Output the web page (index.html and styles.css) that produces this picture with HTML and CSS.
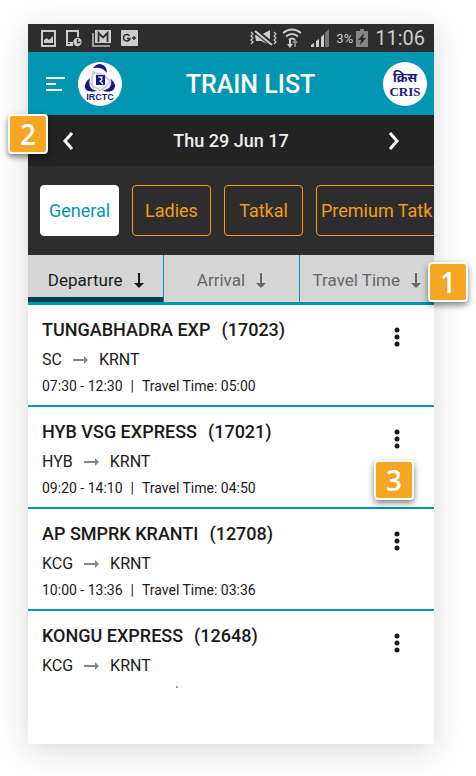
FILE: index.html
```html
<!DOCTYPE html>
<html lang="en">
<head>
<meta charset="utf-8">
<meta name="viewport" content="width=device-width, initial-scale=1">
<title>Train List</title>
<link rel="stylesheet" href="styles.css">
</head>
<body>
<main class="phone">
  <div class="status">
    <div class="status-left">
      <svg width="15" height="17" viewBox="0 0 15 17"><path fill="#ccc" fill-rule="evenodd" d="M0 0h15v17H0zM2 2v13h11V2zM3 13v-3l3-2 2 2 4-4v7z"/></svg>
      <svg width="16" height="17" viewBox="0 0 16 17"><path fill="#ccc" fill-rule="evenodd" d="M0 0h13v7h-2V2H2v10h5v4H0zM2 13v1h2v-1z"/><circle cx="11.500" cy="12" r="4.200" fill="#ccc"/><path d="M11.500 9v3.500h3" fill="none" stroke="#2d2d2d" stroke-width="1.300"/></svg>
      <svg width="19" height="17" viewBox="0 0 19 17"><path d="M1 3v13h17" fill="none" stroke="#bbb" stroke-width="1.600"/><path fill="#ccc" d="M3 0h16v13H3z"/><path d="M6.500 12V3l4.500 4.500L15.500 3v9" fill="none" stroke="#2d2d2d" stroke-width="1.800"/></svg>
      <svg width="17" height="16" viewBox="0 0 17 16"><rect width="17" height="16" rx="1" fill="#ccc"/><path d="M8.500 5.800A3.300 3.300 0 1 0 9 8.500H6M11 8h4M13 6v4" fill="none" stroke="#2d2d2d" stroke-width="1.500"/></svg>
    </div>
    <div class="status-right">
      <svg width="27" height="18" viewBox="0 0 27 18"><path fill="#ccc" d="M5 6h6l9-5v15l-9-4H6z"/><path d="M4 1l19 15" stroke="#2d2d2d" stroke-width="5"/><path d="M5 2l17 14" stroke="#ccc" stroke-width="2.200"/><path d="M1 3l2 2-2 2 2 2-2 2 2 2-2 2M24 3l2 2-2 2 2 2-2 2 2 2-2 2" fill="none" stroke="#ccc" stroke-width="1.200"/></svg>
      <svg class="wifi" width="20" height="20" viewBox="0 0 20 20"><g fill="none" stroke="#ccc" stroke-width="2"><path d="M1 5q9-7 18 0M4 8.500q6-5 12 0M7 12q3-3 6 0"/></g><path fill="#ccc" d="M7 12h2v4h2l-3 4-3-4h2z"/><path fill="#888" d="M12 19h2v-4h2l-3-4-3 4h2z"/></svg>
      <svg class="signal" width="18" height="18" viewBox="0 0 18 18"><path fill="#ccc" d="M0 18v-2l3-2v4zM5 18v-6l3-2v8zM10 18V8l3-3v13z"/><path fill="#777" d="M14 18V4l4-4v18z"/></svg>
      <span class="percent">3%</span>
      <svg class="battery" width="12" height="18" viewBox="0 0 12 18"><path fill="#858585" d="M4 0h4v2h4v16H0V2h4z"/><path fill="#2d2d2d" d="M8 4L2 11h3l-1 5 6-7H7z"/></svg>
      <span class="clock">11:06</span>
    </div>
  </div>

  <header class="appbar">
    <button class="icon-button" aria-label="Menu"><svg width="19" height="14" viewBox="0 0 19 14"><path d="M0 1h19M0 7h10M0 13h16" stroke="#fff" stroke-width="2"/></svg></button>
    <svg class="logo" width="44" height="44" viewBox="0 0 44 44">
      <circle cx="22" cy="22" r="22" fill="#fff"/>
      <g fill="none" stroke="#c9c8dc" stroke-width="1.800"><path d="M16 8q-4 10 0 19M16 11q9 0 16 8M33 17q-3 8-12 12M11 20q8 9 16 8"/></g>
      <g fill="#171780"><path d="M15 6Q18 2 22 2q7 1 7 9l-3-3q-3-3-11-2z"/><path d="M12 16q-6 5-5 10 2 5 12 3l-5-2q-4-3-2-11z"/><path d="M33 17q6 6 3 10-3 4-11 2l6-3q3-3 2-9z"/><path d="M18 13h9v10h-9z"/></g>
      <path d="M20 15h5M22 15q4 3 0 4l3 3" fill="none" stroke="#fff" stroke-width="1.200"/>
      <text x="22" y="38" class="irctc">IRCTC</text>
    </svg>
    <h1>TRAIN LIST</h1>
    <svg class="logo" width="44" height="44" viewBox="0 0 44 44">
      <circle cx="22" cy="22" r="22" fill="#fff"/>
      <text x="22" y="20" class="cris-hindi">क्रिस</text>
      <text x="22" y="34" class="cris">CRIS</text>
    </svg>
  </header>

  <section class="date">
    <button class="icon-button" aria-label="Previous day"><svg width="12" height="18" viewBox="0 0 12 18"><path d="M10 1L3 9l7 8" fill="none" stroke="#fff" stroke-width="3"/></svg></button>
    <span>Thu 29 Jun 17</span>
    <button class="icon-button" aria-label="Next day"><svg width="12" height="18" viewBox="0 0 12 18"><path d="M2 1l7 8-7 8" fill="none" stroke="#fff" stroke-width="3"/></svg></button>
  </section>

  <nav class="quotas">
    <button class="quota selected">General</button>
    <button class="quota">Ladies</button>
    <button class="quota">Tatkal</button>
    <button class="quota wide">Premium Tatk</button>
  </nav>

  <div class="sorts">
    <button class="sort active">Departure <svg width="10" height="15" viewBox="0 0 10 15"><path d="M5 0v12" stroke="currentColor" stroke-width="2"/><path d="M0 10h10l-5 5z" fill="currentColor"/></svg></button>
    <button class="sort">Arrival <svg width="10" height="15" viewBox="0 0 10 15"><path d="M5 0v12" stroke="currentColor" stroke-width="2"/><path d="M0 10h10l-5 5z" fill="currentColor"/></svg></button>
    <button class="sort">Travel Time <svg width="10" height="15" viewBox="0 0 10 15"><path d="M5 0v12" stroke="currentColor" stroke-width="2"/><path d="M0 10h10l-5 5z" fill="currentColor"/></svg></button>
    <span class="badge badge-sort">1</span>
  </div>

  <ul class="trains">
    <li class="train">
      <div>
        <h2><span>TUNGABHADRA EXP</span><span>(17023)</span></h2>
        <p class="route"><span>SC</span><svg width="15" height="9" viewBox="0 0 15 9"><path d="M0 4h11" stroke="#858585" stroke-width="2"/><path d="M11 0l4 4-4 4z" fill="#858585"/></svg><span>KRNT</span></p>
        <p class="times"><span>07:30 - 12:30</span><span>|</span><span>Travel Time: 05:00</span></p>
      </div>
      <button class="icon-button" aria-label="More"><svg width="6" height="20" viewBox="0 0 6 20"><g fill="#1a1a1a"><circle cx="3" cy="3" r="2.500"/><circle cx="3" cy="10" r="2.500"/><circle cx="3" cy="17" r="2.500"/></g></svg></button>
    </li>
    <li class="train">
      <div>
        <h2><span>HYB VSG EXPRESS</span><span>(17021)</span></h2>
        <p class="route"><span>HYB</span><svg width="15" height="9" viewBox="0 0 15 9"><path d="M0 4h11" stroke="#858585" stroke-width="2"/><path d="M11 0l4 4-4 4z" fill="#858585"/></svg><span>KRNT</span></p>
        <p class="times"><span>09:20 - 14:10</span><span>|</span><span>Travel Time: 04:50</span></p>
      </div>
      <button class="icon-button" aria-label="More"><svg width="6" height="20" viewBox="0 0 6 20"><g fill="#1a1a1a"><circle cx="3" cy="3" r="2.500"/><circle cx="3" cy="10" r="2.500"/><circle cx="3" cy="17" r="2.500"/></g></svg></button>
      <span class="badge badge-more">3</span>
    </li>
    <li class="train">
      <div>
        <h2><span>AP SMPRK KRANTI</span><span>(12708)</span></h2>
        <p class="route"><span>KCG</span><svg width="15" height="9" viewBox="0 0 15 9"><path d="M0 4h11" stroke="#858585" stroke-width="2"/><path d="M11 0l4 4-4 4z" fill="#858585"/></svg><span>KRNT</span></p>
        <p class="times"><span>10:00 - 13:36</span><span>|</span><span>Travel Time: 03:36</span></p>
      </div>
      <button class="icon-button" aria-label="More"><svg width="6" height="20" viewBox="0 0 6 20"><g fill="#1a1a1a"><circle cx="3" cy="3" r="2.500"/><circle cx="3" cy="10" r="2.500"/><circle cx="3" cy="17" r="2.500"/></g></svg></button>
    </li>
    <li class="train">
      <div>
        <h2><span>KONGU EXPRESS</span><span>(12648)</span></h2>
        <p class="route"><span>KCG</span><svg width="15" height="9" viewBox="0 0 15 9"><path d="M0 4h11" stroke="#858585" stroke-width="2"/><path d="M11 0l4 4-4 4z" fill="#858585"/></svg><span>KRNT</span></p>
        <div class="speck"></div>
      </div>
      <button class="icon-button" aria-label="More"><svg width="6" height="20" viewBox="0 0 6 20"><g fill="#1a1a1a"><circle cx="3" cy="3" r="2.500"/><circle cx="3" cy="10" r="2.500"/><circle cx="3" cy="17" r="2.500"/></g></svg></button>
    </li>
  </ul>
  <span class="badge badge-date">2</span>
</main>
</body>
</html>
```
FILE: styles.css
```css
* { box-sizing: border-box; }

body {
  margin: 0;
  padding: 24px 42px 32px 28px;
  background: #fff;
  color: #1a1a1a;
  font-family: Roboto, "Liberation Sans", sans-serif;
}

h1, h2, p, ul { margin: 0; padding: 0; }
svg { display: block; flex: none; }
button { border: 0; background: none; font: inherit; color: inherit; cursor: pointer; }
.icon-button { padding: 0; flex: none; }

.phone {
  position: relative;
  background: #fff;
  box-shadow: 0 6px 30px rgba(0, 0, 0, 0.16);
}

.status {
  display: flex;
  align-items: center;
  justify-content: space-between;
  height: 28px;
  padding: 0 9px 0 13px;
  background: #2d2d2d;
  color: #ccc;
}
.status-left, .status-right { display: flex; align-items: center; }
.status-left { gap: 10px; }
.wifi { margin-left: 5px; }
.signal { margin-left: 9px; }
.percent { margin-left: 7px; font-size: 13px; }
.battery { margin: 0 7px 0 3px; }
.clock { font-size: 20px; line-height: 30px; }

.appbar {
  display: flex;
  align-items: center;
  height: 63px;
  padding: 0 7px 0 18px;
  background: #0296b3;
  color: #fff;
}
.appbar .icon-button { margin-right: 13px; }
.appbar h1 { flex: 1; padding: 2px 4px 0 0; font-size: 25px; font-weight: 500; text-align: center; }
.irctc { fill: #171780; font: 700 9px "Liberation Sans", sans-serif; text-anchor: middle; }
.cris { fill: #171780; font: 700 13px "Liberation Serif", serif; text-anchor: middle; }
.cris-hindi { fill: #171780; font: 700 13px "Noto Sans", sans-serif; text-anchor: middle; }

.date {
  display: flex;
  align-items: center;
  justify-content: space-between;
  height: 51px;
  padding: 0 34px;
  background: #232323;
  color: #eee;
  font-size: 18px;
  font-weight: 500;
}

.quotas {
  display: flex;
  gap: 13px;
  padding: 19px 0 19px 12px;
  overflow: hidden;
  background: #2d2d2d;
}
.quota {
  flex: none;
  width: 79px;
  height: 51px;
  padding: 0;
  border: 1px solid #f39c1b;
  border-radius: 4px;
  color: #f39c1b;
  font-size: 18px;
  white-space: nowrap;
}
.quota.wide { width: 136px; padding-left: 4px; text-align: left; }
.quota.selected { border-color: #fff; background: #fff; color: #0296b3; }

.sorts {
  position: relative;
  display: grid;
  grid-template-columns: 1fr 1fr 1fr;
  height: 50px;
  border-bottom: 3px solid #0296b3;
  background: #d5d5d5;
}
.sort {
  display: flex;
  align-items: center;
  justify-content: center;
  gap: 11px;
  padding: 3px 0 0;
  border-left: 1px solid #0296b3;
  color: #666;
  font-size: 17px;
  white-space: nowrap;
}
.sort.active { border-left: 0; border-bottom: 5px solid #02404c; padding-top: 8px; color: #1a1a1a; }

.trains { list-style: none; }
.train {
  position: relative;
  display: flex;
  align-items: flex-start;
  justify-content: space-between;
  height: 102px;
  padding: 12px 34px 0 14px;
  border-bottom: 2px solid #0296b3;
}
.train:last-child { height: 133px; border-bottom: 0; }
.train .icon-button { margin-top: 10px; }
.train h2 { display: flex; gap: 11px; font-size: 18px; line-height: 25px; font-weight: 500; }
.route { display: flex; align-items: center; gap: 11px; padding-top: 5px; font-size: 16px; line-height: 26px; }
.times { display: flex; gap: 8px; font-size: 14px; line-height: 26px; }
.speck { width: 2px; height: 2px; margin: 7px 0 0 134px; background: #999; }

.badge {
  position: absolute;
  z-index: 1;
  width: 40px;
  height: 40px;
  border: 2px solid #fff;
  border-radius: 4px;
  background: #f5a623;
  box-shadow: 0 3px 6px rgba(0, 0, 0, 0.5);
  color: #fff;
  font: 600 28px/36px "Open Sans", sans-serif;
  text-align: center;
}
.badge-sort { right: -34px; top: 7px; }
.badge-more { right: 20px; top: 53px; }
.badge-date { left: -20px; top: 90px; }
```
